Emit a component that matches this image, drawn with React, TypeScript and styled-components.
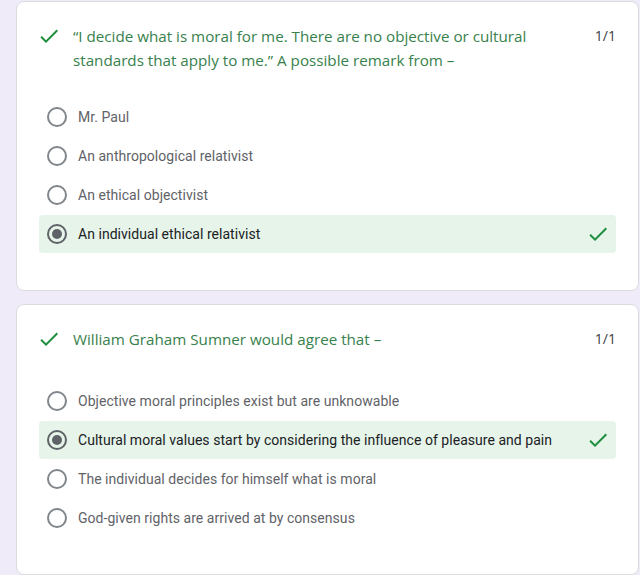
import React from "react";
import styled, { createGlobalStyle } from "styled-components";

const Global = createGlobalStyle`
  html, body { margin: 0; padding: 0; background: #f0ebf8; }
  body { width: 640px; height: 575px; overflow: hidden; font-family: Roboto, Arial, sans-serif; }
`;

const Page = styled.div`
  display: flex;
  flex-direction: column;
  gap: 13px;
  padding: 1px 1px 0 16px;
`;

const Card = styled.section`
  background: #fff;
  border: 1px solid #dadce0;
  border-radius: 8px;
  padding: 22px 22px 37px 22px;
`;

const TitleRow = styled.div<{ $after: number }>`
  display: flex;
  align-items: flex-start;
  margin-bottom: ${(p) => p.$after}px;
`;

const TitleIcon = styled.div`
  width: 24px;
  height: 24px;
  flex: none;
  margin: 0 12px 0 -2px;
  display: flex;
  align-items: center;
  justify-content: center;
`;

const TitleText = styled.div`
  flex: 1;
  font-family: "Open Sans", Roboto, sans-serif;
  font-size: 15.2px;
  line-height: 24px;
  color: #37814c;
  padding-right: 30px;
`;

const Score = styled.div`
  font-family: "Open Sans", Roboto, sans-serif;
  font-size: 14px;
  line-height: 24px;
  color: #3c4043;
`;

const Options = styled.div`
  display: flex;
  flex-direction: column;
  gap: 1px;
`;

const Option = styled.div<{ $correct?: boolean }>`
  display: flex;
  align-items: center;
  height: 38px;
  padding: 0 6px 0 8px;
  border-radius: 4px;
  background: ${(p) => (p.$correct ? "#e6f4ea" : "transparent")};
`;

const Radio = styled.span<{ $checked?: boolean }>`
  width: 20px;
  height: 20px;
  box-sizing: border-box;
  border-radius: 50%;
  border: 2px solid ${(p) => (p.$checked ? "#5f6368" : "#80868b")};
  flex: none;
  display: flex;
  align-items: center;
  justify-content: center;
  &::after {
    content: "";
    display: ${(p) => (p.$checked ? "block" : "none")};
    width: 10px;
    height: 10px;
    border-radius: 50%;
    background: #5f6368;
  }
`;

const Label = styled.span<{ $checked?: boolean }>`
  flex: 1;
  margin-left: 11px;
  font-size: 14px;
  color: ${(p) => (p.$checked ? "#202124" : "#5f6368")};
  letter-spacing: 0.04px;
`;

const Check = ({ size = 24 }: { size?: number }) => (
  <svg width={size} height={size} viewBox="0 0 24 24">
    <path d="M9 16.2L4.8 12l-1.4 1.4L9 19 21 7l-1.4-1.4L9 16.2z" fill="#1e8e3e" />
  </svg>
);

type Q = {
  title: string;
  options: string[];
  answer: number;
  after: number;
};

const questions: Q[] = [
  {
    title:
      "\u201CI decide what is moral for me. There are no objective or cultural standards that apply to me.\u201D A possible remark from \u2013",
    options: [
      "Mr. Paul",
      "An anthropological relativist",
      "An ethical objectivist",
      "An individual ethical relativist",
    ],
    answer: 3,
    after: 26,
  },
  {
    title: "William Graham Sumner would agree that \u2013",
    options: [
      "Objective moral principles exist but are unknowable",
      "Cultural moral values start by considering the influence of pleasure and pain",
      "The individual decides for himself what is moral",
      "God-given rights are arrived at by consensus",
    ],
    answer: 1,
    after: 31,
  },
];

export default function App() {
  return (
    <>
      <Global />
      <Page>
        {questions.map((q, qi) => (
          <Card key={qi}>
            <TitleRow $after={q.after}>
              <TitleIcon>
                <Check />
              </TitleIcon>
              <TitleText>{q.title}</TitleText>
              <Score>1/1</Score>
            </TitleRow>
            <Options>
              {q.options.map((o, i) => (
                <Option key={i} $correct={i === q.answer}>
                  <Radio $checked={i === q.answer} />
                  <Label $checked={i === q.answer}>{o}</Label>
                  {i === q.answer && <Check />}
                </Option>
              ))}
            </Options>
          </Card>
        ))}
      </Page>
    </>
  );
}
